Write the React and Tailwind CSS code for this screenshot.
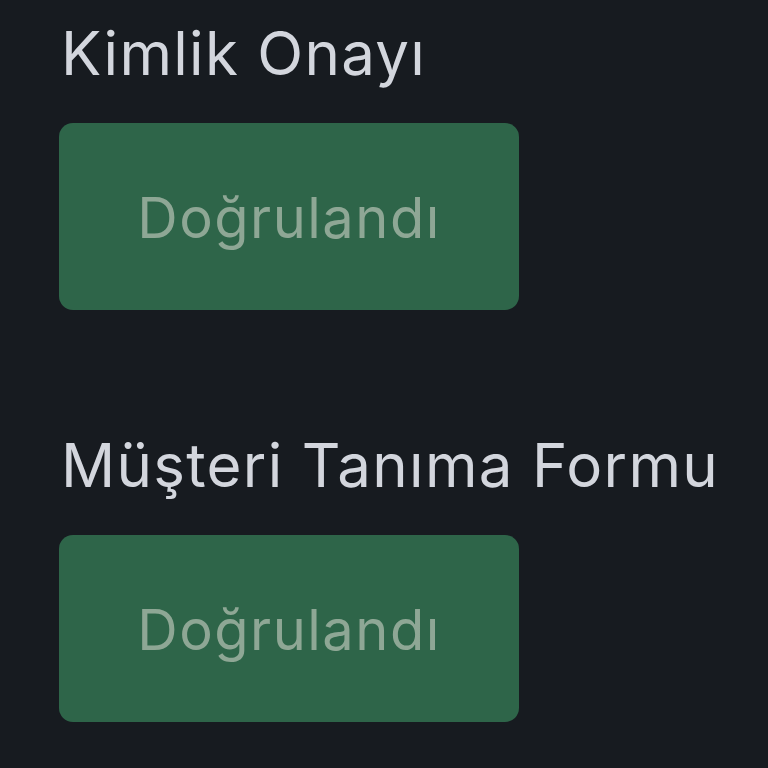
import React from 'react';

// Verification status list (zoomed mobile view)
const items = [
    { id: 'kimlik', label: 'Kimlik Onayı', status: 'Doğrulandı' },
    { id: 'musteri', label: 'Müşteri Tanıma Formu', status: 'Doğrulandı' },
];

const StatusBlock = ({ label, status }) => (
    <div>
        <h2 className="pl-[2px] text-[60px] leading-[60px] text-[#d3d6dd] tracking-[1.3px]">{label}</h2>
        <div className="mt-[40px] w-[460px] h-[187px] rounded-[14px] bg-[#2e6549] flex items-center justify-center pt-[3px]">
            <span className="text-[56px] text-[#8ea795] tracking-[1.5px]">{status}</span>
        </div>
    </div>
);

const App = () => {
    return (
        <div
            className="w-[768px] h-[768px] overflow-hidden bg-[#171b20] pl-[59px] pt-[23px] flex flex-col gap-[125px]"
            style={{ fontFamily: 'Inter, "Noto Sans", sans-serif' }}
        >
            {items.map((item) => (
                <StatusBlock key={item.id} label={item.label} status={item.status} />
            ))}
        </div>
    );
};

export default App;
